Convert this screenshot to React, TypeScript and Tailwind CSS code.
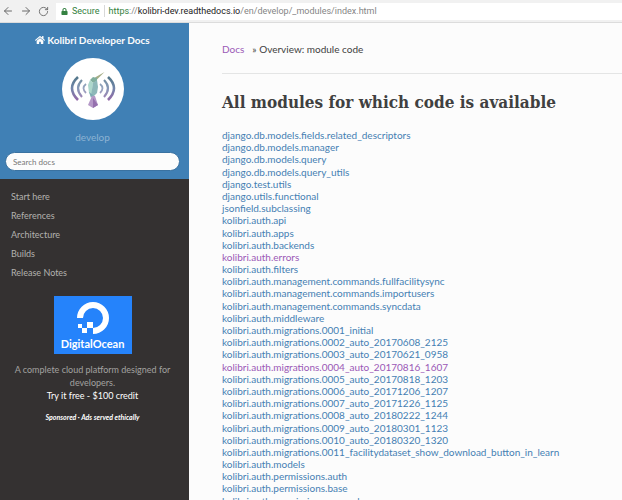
import { ArrowLeft, ArrowRight, RotateCw } from "lucide-react";
import { FaHome, FaLock } from "react-icons/fa";

const navigation = ["Start here", "References", "Architecture", "Builds", "Release Notes"];

const modules = [
  "django.db.models.fields.related_descriptors",
  "django.db.models.manager",
  "django.db.models.query",
  "django.db.models.query_utils",
  "django.test.utils",
  "django.utils.functional",
  "jsonfield.subclassing",
  "kolibri.auth.api",
  "kolibri.auth.apps",
  "kolibri.auth.backends",
  "kolibri.auth.errors",
  "kolibri.auth.filters",
  "kolibri.auth.management.commands.fullfacilitysync",
  "kolibri.auth.management.commands.importusers",
  "kolibri.auth.management.commands.syncdata",
  "kolibri.auth.middleware",
  "kolibri.auth.migrations.0001_initial",
  "kolibri.auth.migrations.0002_auto_20170608_2125",
  "kolibri.auth.migrations.0003_auto_20170621_0958",
  "kolibri.auth.migrations.0004_auto_20170816_1607",
  "kolibri.auth.migrations.0005_auto_20170818_1203",
  "kolibri.auth.migrations.0006_auto_20171206_1207",
  "kolibri.auth.migrations.0007_auto_20171226_1125",
  "kolibri.auth.migrations.0008_auto_20180222_1244",
  "kolibri.auth.migrations.0009_auto_20180301_1123",
  "kolibri.auth.migrations.0010_auto_20180320_1320",
  "kolibri.auth.migrations.0011_facilitydataset_show_download_button_in_learn",
  "kolibri.auth.models",
  "kolibri.auth.permissions.auth",
  "kolibri.auth.permissions.base",
  "kolibri.auth.permissions.general",
];

const visited = new Set(["kolibri.auth.errors", "kolibri.auth.migrations.0004_auto_20170816_1607"]);

function BrowserBar() {
  return (
    <header className="flex h-[23px] shrink-0 items-center border-b border-[#dcdcdc] bg-[#f1f1f1] font-[Roboto,sans-serif] text-[9px] leading-4">
      <div className="flex w-14 shrink-0 items-center gap-1.5 pl-[2px] text-[#6b6b6b]">
        <button type="button" aria-label="Back"><ArrowLeft size={12} strokeWidth={2} /></button>
        <button type="button" aria-label="Forward"><ArrowRight size={12} strokeWidth={2} /></button>
        <button type="button" aria-label="Reload"><RotateCw size={11} strokeWidth={2} /></button>
      </div>
      <div className="flex h-[17px] min-w-0 flex-1 items-center whitespace-nowrap bg-white pl-[5px]">
        <FaLock size={7} className="mr-1 text-[#348141]" />
        <span className="text-[#348141]">Secure</span>
        <span className="mx-1 h-3 w-px bg-[#d8d8d8]" />
        <span className="text-[#858585]">
          <span className="text-[#348141]">https</span>://<span className="text-[#222]">kolibri-dev.readthedocs.io</span>/en/develop/_modules/index.html
        </span>
      </div>
    </header>
  );
}

function KolibriLogo() {
  return (
    <svg viewBox="0 0 64 64" className="size-16" role="img" aria-label="Kolibri">
      <defs>
        <linearGradient id="wave" x1="0" y1="18" x2="0" y2="44" gradientUnits="userSpaceOnUse">
          <stop offset="0" stopColor="#4d7484" />
          <stop offset="0.5" stopColor="#7186aa" />
          <stop offset="1" stopColor="#9667a8" />
        </linearGradient>
      </defs>
      <circle cx="32" cy="32" r="31" fill="#fff" />
      <g fill="none" stroke="url(#wave)">
        <path strokeWidth="2.6" d="M17 20Q5 31 17 43M47 20Q59 31 47 43" />
        <path strokeWidth="2.1" d="M21 23Q13 31 21 40M43 23Q51 31 43 40" opacity=".85" />
        <path strokeWidth="1.8" d="M25 27Q20 31 25 36M39 27Q44 31 39 36" opacity=".75" />
      </g>
      <path d="M34 20.500L43.500 15L36 22.500Z" fill="#a5ad87" />
      <path d="M29 23L32 20L36 21L36 24L32 26Z" fill="#7fae9d" />
      <path d="M29 23L32 26L31 38L28 36L27 28Z" fill="#add8cc" />
      <path d="M32 26L36 23L37 30L36 36L33 39L30 39Z" fill="#8db8b9" />
      <path d="M28 35L32 38L30 41Z" fill="#7caab3" />
      <path d="M31 39L34 39L37 48L32 51L27 48Z" fill="#b498c7" />
      <path d="M32 41L37 48L32 51Z" fill="#9570ae" />
    </svg>
  );
}

function DigitalOceanAd() {
  return (
    <aside className="mt-[14px] pr-4 pl-3 text-center text-[9px] leading-[13px] text-[#a3a2a0]">
      <a href="#digitalocean" aria-label="DigitalOcean" className="mx-auto flex h-[58px] w-[78px] flex-col items-center bg-[#2583fb] pt-1.5 text-white">
        <svg viewBox="0 0 32 32" className="size-8 shrink-0" aria-hidden="true">
          <path d="M3 16A13 13 0 1 1 16 29" fill="none" stroke="#fff" strokeWidth="6" />
          <path d="M10 20h6v6h-6zM5 26h5v5H5zM1 22h4v4H1z" fill="#fff" />
        </svg>
        <span className="text-[11px] font-bold leading-[20px]">DigitalOcean</span>
      </a>
      <p className="mt-[9px]">A complete cloud platform designed for developers.</p>
      <a href="#credit" className="block text-white">Try it free - $100 credit</a>
      <p className="mt-[9px] text-[7px] font-bold italic text-white">
        <a href="#sponsored">Sponsored</a> · <a href="#ethical-ads">Ads served ethically</a>
      </p>
    </aside>
  );
}

function Sidebar() {
  return (
    <div className="w-[189px] shrink-0 bg-[#343131]">
      <div className="flex flex-col items-center bg-[#4080b5] pt-2 pr-[9px] pb-2 pl-[5px]">
        <a href="#home" className="flex items-center gap-0.5 text-[10px] font-bold leading-[18px] text-[#fcfcfc]">
          <FaHome size={10} />
          Kolibri Developer Docs
        </a>
        <div className="mt-2"><KolibriLogo /></div>
        <div className="mt-2 text-[10px] leading-4 text-[#8cb3d3]">develop</div>
        <input
          type="search"
          aria-label="Search docs"
          placeholder="Search docs"
          className="mt-[7px] h-[19px] w-full appearance-none rounded-full border border-[#3a72a1] bg-[#fcfcfc] px-[7px] text-[8px] text-[#444] placeholder:text-[#777]"
        />
      </div>
      <nav aria-label="Documentation" className="pt-2">
        {navigation.map((item) => (
          <a key={item} href="#docs" className="block px-[11px] text-[9px] leading-[19px] text-[#b3b1af]">
            {item}
          </a>
        ))}
      </nav>
      <DigitalOceanAd />
    </div>
  );
}

export default function App() {
  return (
    <div className="flex h-screen flex-col overflow-hidden bg-[#fcfcfc] font-[Lato,sans-serif] text-[#404040]">
      <BrowserBar />
      <div className="flex min-h-0 flex-1">
        <Sidebar />
        <main className="min-w-0 flex-1 overflow-hidden pt-[18px] pl-[33px]">
          <nav aria-label="Breadcrumb" className="flex gap-2 border-b border-[#e4e5e5] pb-4 text-[10px] leading-4">
            <a href="#index" className="text-[#9b59b6]">Docs</a>
            <span>» Overview: module code</span>
          </nav>
          <h1 className="mt-4 font-['DejaVu_Serif_Condensed','DejaVu_Serif',serif] text-[17px] font-bold leading-6">
            All modules for which code is available
          </h1>
          <ul className="mt-[15px] text-[10px] leading-[1.22]">
            {modules.map((name) => (
              <li key={name}>
                <a href="#module" className={visited.has(name) ? "text-[#9b59b6]" : "text-[#457fb3]"}>{name}</a>
              </li>
            ))}
          </ul>
        </main>
      </div>
    </div>
  );
}
